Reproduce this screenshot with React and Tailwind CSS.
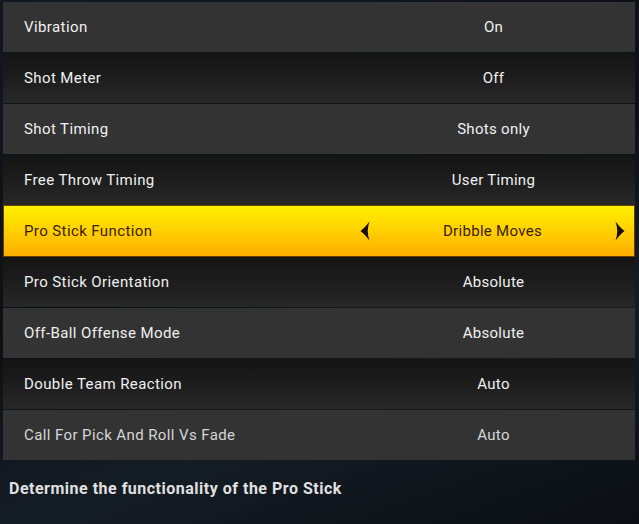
import React from "react";

const rows = [
  ["Vibration", "On"],
  ["Shot Meter", "Off"],
  ["Shot Timing", "Shots only"],
  ["Free Throw Timing", "User Timing"],
  ["Pro Stick Function", "Dribble Moves", true],
  ["Pro Stick Orientation", "Absolute"],
  ["Off-Ball Offense Mode", "Absolute"],
  ["Double Team Reaction", "Auto"],
  ["Call For Pick And Roll Vs Fade", "Auto"],
];

function Arrow({ dir }) {
  return (
    <svg width="10" height="20" viewBox="0 0 10 20" className={dir === "right" ? "scale-x-[-1]" : ""}>
      <path d="M9.5 0.5 Q4.5 7 0.5 10 Q4.5 13 9.5 19.5 Q6 10 9.5 0.5Z" fill="#1a0e00" />
    </svg>
  );
}

export default function App() {
  return (
    <div
      className="w-[639px] h-[524px] overflow-hidden bg-[linear-gradient(160deg,#111820_0%,#0c1016_45%,#141c24_70%,#0b0f14_100%)] flex flex-col"
      style={{ fontFamily: "Roboto, 'Liberation Sans', sans-serif" }}
    >
      <div className="flex flex-col gap-[1px] pt-[2px] pl-[3px] pr-[4px]">
        {rows.map(([label, value, active], i) => {
          if (active) {
            return (
              <div
                key={i}
                className="h-[52px] -my-[1px] flex items-center border border-[#6b3d00] bg-[linear-gradient(180deg,#fff000_0%,#ffd000_50%,#ffad00_100%)] text-[#3a1c00]"
              >
                <div className="flex-1 pl-[20px] text-[15px] font-normal tracking-[0.4px]">{label}</div>
                <div className="w-[283px] flex items-center justify-between pl-[9px] pr-[9px] text-[15px] font-normal tracking-[0.3px]">
                  <Arrow dir="left" />
                  <span>{value}</span>
                  <Arrow dir="right" />
                </div>
              </div>
            );
          }
          const odd = i % 2 === 0;
          return (
            <div
              key={i}
              className={
                "h-[50px] flex items-center " +
                (odd
                  ? "bg-[#333333]"
                  : "bg-[linear-gradient(180deg,#141414_0%,#1d1d1d_50%,#282828_100%)]") +
                (i === 8 ? " text-[#d6d6d6] bg-[#2c2c2c]" : " text-[#f0f0f0]")
              }
            >
              <div className="flex-1 pl-[21px] text-[15px] font-normal tracking-[0.4px]">{label}</div>
              <div className="w-[283px] flex items-center justify-center text-[15px] font-normal tracking-[0.3px]">
                {value}
              </div>
            </div>
          );
        })}
      </div>
      <div className="pl-[9px] pt-[17px] text-[16px] font-bold text-[#e0e0e0] tracking-[0.5px]">
        Determine the functionality of the Pro Stick
      </div>
    </div>
  );
}
